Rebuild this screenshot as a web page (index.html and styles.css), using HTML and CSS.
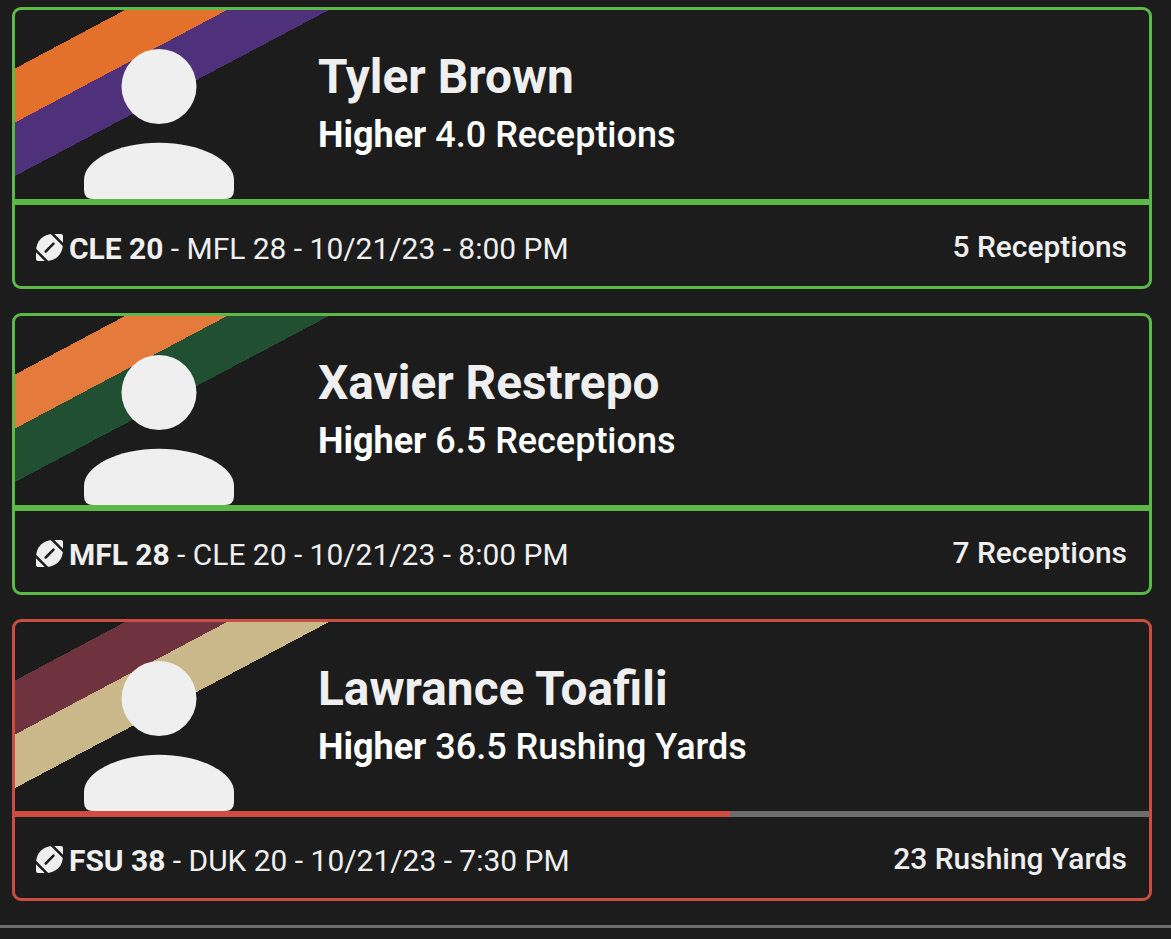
FILE: index.html
```html
<!DOCTYPE html>
<html lang="en">
<head>
    <meta charset="UTF-8">
    <title>Picks</title>
    <link rel="stylesheet" href="styles.css">
</head>
<body>
    <!-- Shared icons -->
    <svg class="icon-defs" width="0" height="0">
      <symbol id="player" viewBox="0 0 150 150">
        <circle cx="75" cy="37.5" r="37.5"/>
        <path d="M0 131C0 111 34 93.800 75 93.800S150 111 150 131V141Q150 150 141 150H9Q0 150 0 141Z"/>
      </symbol>
      <symbol id="football" viewBox="0 0 27 27">
        <path d="M25 0H17.500C7 0 0 7 0 17.500V25Q0 27 2 27H9.500C20 27 27 20 27 9.500V2Q27 0 25 0Z"/>
        <path class="football-line" d="M14.500 -2L29 12.500M-2 14.500L12.500 29"/>
        <path class="football-lace" d="M9.700 17.500L17.500 9.700"/>
      </symbol>
    </svg>

    <div class="pick-list">
      <div class="pick won">
        <div class="pick-top">
          <svg class="stripes clemson" viewBox="0 0 314 166">
            <polygon class="stripe-one" points="0,58.500 110,0 212,0 0,112.500"/>
            <polygon class="stripe-two" points="0,112.500 212,0 314,0 0,166"/>
          </svg>
          <svg class="avatar"><use href="#player"/></svg>
          <div class="pick-info">
            <h2>Tyler Brown</h2>
            <p><b>Higher</b> 4.0 Receptions</p>
          </div>
        </div>
        <div class="progress"><div class="progress-fill" style="width: 100%"></div></div>
        <div class="pick-footer">
          <svg class="ball"><use href="#football"/></svg>
          <span class="game"><b>CLE 20</b> - MFL 28 - 10/21/23 - 8:00 PM</span>
          <span class="result">5 Receptions</span>
        </div>
      </div>

      <div class="pick won">
        <div class="pick-top">
          <svg class="stripes miami" viewBox="0 0 314 166">
            <polygon class="stripe-one" points="0,58.500 110,0 212,0 0,112.500"/>
            <polygon class="stripe-two" points="0,112.500 212,0 314,0 0,166"/>
          </svg>
          <svg class="avatar"><use href="#player"/></svg>
          <div class="pick-info">
            <h2>Xavier Restrepo</h2>
            <p><b>Higher</b> 6.5 Receptions</p>
          </div>
        </div>
        <div class="progress"><div class="progress-fill" style="width: 100%"></div></div>
        <div class="pick-footer">
          <svg class="ball"><use href="#football"/></svg>
          <span class="game"><b>MFL 28</b> - CLE 20 - 10/21/23 - 8:00 PM</span>
          <span class="result">7 Receptions</span>
        </div>
      </div>

      <div class="pick lost">
        <div class="pick-top">
          <svg class="stripes florida-state" viewBox="0 0 314 166">
            <polygon class="stripe-one" points="0,58.500 110,0 212,0 0,112.500"/>
            <polygon class="stripe-two" points="0,112.500 212,0 314,0 0,166"/>
          </svg>
          <svg class="avatar"><use href="#player"/></svg>
          <div class="pick-info">
            <h2>Lawrance Toafili</h2>
            <p><b>Higher</b> 36.5 Rushing Yards</p>
          </div>
        </div>
        <div class="progress"><div class="progress-fill" style="width: 63.01%"></div></div>
        <div class="pick-footer">
          <svg class="ball"><use href="#football"/></svg>
          <span class="game"><b>FSU 38</b> - DUK 20 - 10/21/23 - 7:30 PM</span>
          <span class="result">23 Rushing Yards</span>
        </div>
      </div>
    </div>
</body>
</html>
```
FILE: styles.css
```css
* {
  box-sizing: border-box;
}

body {
  margin: 0;
  background-color: #1c1c1c;
  color: #efefef;
  font-family: Roboto, sans-serif;
  overflow: hidden;
}

.icon-defs {
  display: block;
}

/* List of picks, closed by a grey line */
.pick-list {
  display: flex;
  flex-direction: column;
  gap: 24px;
  padding: 7px 19px 24px 12px;
  border-bottom: 3px solid #6d6d6d;
}

.pick {
  height: 282px;
  border: 3px solid;
  border-radius: 9px;
  overflow: hidden;
}

.won {
  border-color: #5bb947;
}

.lost {
  border-color: #ca4c42;
}

.pick-top {
  position: relative;
  display: flex;
  height: 189px;
}

/* Team colours behind the player */
.stripes {
  position: absolute;
  top: 0;
  left: 0;
  width: 314px;
  height: 166px;
  shape-rendering: crispEdges;
}

.clemson .stripe-one { fill: #e3712c; }
.clemson .stripe-two { fill: #4f307b; }
.miami .stripe-one { fill: #e47a3c; }
.miami .stripe-two { fill: #204f32; }
.florida-state .stripe-one { fill: #6e333f; }
.florida-state .stripe-two { fill: #cab88b; }

.avatar {
  position: relative;
  width: 150px;
  height: 150px;
  margin: 39px 84px 0 69px;
  fill: #efefef;
}

.pick-info {
  padding-top: 38px;
}

.pick-info h2 {
  margin: 0;
  font-size: 47.8px;
  line-height: 58px;
  font-weight: 700;
}

.pick-info p {
  margin: 8px 0 0;
  color: #fff;
  font-size: 36px;
  line-height: 42px;
  font-weight: 500;
}

/* Progress towards the line */
.progress {
  height: 6px;
  background-color: #6d6d6d;
}

.progress-fill {
  height: 100%;
}

.won .progress-fill {
  background-color: #5bb947;
}

.lost .progress-fill {
  background-color: #d04b40;
}

.pick-footer {
  display: flex;
  align-items: center;
  height: 81px;
  padding: 0 22px 0 21px;
  font-size: 29.95px;
}

.ball {
  width: 27px;
  height: 27px;
  margin: 4px 6px 0 0;
  fill: #efefef;
}

.football-line,
.football-lace {
  fill: none;
  stroke: #1c1c1c;
  stroke-width: 2.5;
}

.football-lace {
  stroke-linecap: round;
}

.game {
  padding-top: 6px;
}

.result {
  margin-left: auto;
  padding-top: 2px;
  font-weight: 500;
}
```
